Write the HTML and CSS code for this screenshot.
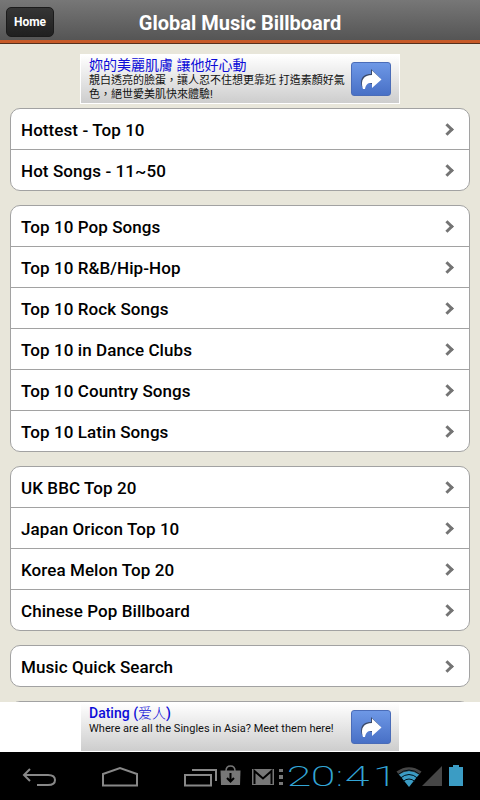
FILE: index.html
```
<!DOCTYPE html>
<html lang="en">

<head>
    <meta charset="UTF-8">
    <meta name="viewport" content="width=device-width, initial-scale=1.0">
    <title>Global Music Billboard</title>
    <link rel="stylesheet" href="styles.css">
</head>

<body>
    <header class="topbar">
        <a class="home" href="#">Home</a>
        <h1>Global Music Billboard</h1>
    </header>

    <main class="content">
        <div class="ad">
            <div class="ad-text">
                <a class="ad-title" href="#">妳的美麗肌膚 讓他好心動</a>
                <p>靚白透亮的臉蛋，讓人忍不住想更靠近 打造素顏好氣色，絕世愛美肌快來體驗!</p>
            </div>
            <div class="ad-button">
                <svg width="22" height="22" viewBox="0 0 22 22">
                    <path class="arrow-shadow" d="M2 18C-1 9 4 5 11 5V0l9 9-2 4-7 2C7 11 4 14 3 18z"/>
                    <path class="arrow" d="M3 20C0 11 4 6 12 6V1.500l9.500 9-9.500 8.500v-5C8 13.500 6 15 5 20z"/>
                </svg>
            </div>
        </div>

        <ul class="list">
            <li><a href="#">Hottest - Top 10</a></li>
            <li><a href="#">Hot Songs - 11~50</a></li>
        </ul>
        <ul class="list">
            <li><a href="#">Top 10 Pop Songs</a></li>
            <li><a href="#">Top 10 R&amp;B/Hip-Hop</a></li>
            <li><a href="#">Top 10 Rock Songs</a></li>
            <li><a href="#">Top 10 in Dance Clubs</a></li>
            <li><a href="#">Top 10 Country Songs</a></li>
            <li><a href="#">Top 10 Latin Songs</a></li>
        </ul>
        <ul class="list">
            <li><a href="#">UK BBC Top 20</a></li>
            <li><a href="#">Japan Oricon Top 10</a></li>
            <li><a href="#">Korea Melon Top 20</a></li>
            <li><a href="#">Chinese Pop Billboard</a></li>
        </ul>
        <ul class="list">
            <li><a href="#">Music Quick Search</a></li>
        </ul>
        <ul class="list">
            <li></li>
        </ul>
    </main>

    <div class="bottom-ad">
        <div class="ad ad-latin">
            <div class="ad-text">
                <a class="ad-title" href="#">Dating (<span class="cjk">爱人</span>)</a>
                <p>Where are all the Singles in Asia? Meet them here!</p>
            </div>
            <div class="ad-button">
                <svg width="22" height="22" viewBox="0 0 22 22">
                    <path class="arrow-shadow" d="M2 18C-1 9 4 5 11 5V0l9 9-2 4-7 2C7 11 4 14 3 18z"/>
                    <path class="arrow" d="M3 20C0 11 4 6 12 6V1.500l9.500 9-9.500 8.500v-5C8 13.500 6 15 5 20z"/>
                </svg>
            </div>
        </div>
    </div>

    <footer class="sysbar">
        <svg class="back" width="36" height="20" viewBox="0 0 36 20">
            <path d="M8 2L2 8l6 6M2 8h24q7 0 7 5t-7 5H15"/>
        </svg>
        <svg class="house" width="38" height="22" viewBox="0 0 38 22">
            <path d="M2 19.500V8l17-6 17 6v11.500z"/>
        </svg>
        <svg class="recent" width="36" height="20" viewBox="0 0 36 20">
            <path d="M2 7h26v10.500H2zM9 2h24v11"/>
        </svg>
        <svg class="market" width="21" height="22" viewBox="0 0 21 22">
            <path class="line" d="M6 6q0-5 4.500-5t4.500 5"/>
            <path class="fill" d="M.5 5.500h20L20 20H1z"/>
            <path class="cut" d="M10.500 8v8M7 13l3.500 3.500 3.500-3.500"/>
        </svg>
        <svg class="mail" width="22" height="16" viewBox="0 0 22 16">
            <path class="fill" d="M0 0h22v16H0z"/>
            <path class="cut" d="M2.500 15V2l8.500 7.500L19.500 2v13"/>
        </svg>
        <svg class="more" width="4" height="16" viewBox="0 0 4 16">
            <path class="fill" d="M0 0h4v3H0zM0 6h4v4H0zM0 13h4v3H0z"/>
        </svg>
        <div class="clock"><span class="digit">2</span><span class="digit">0</span><span class="colon">:</span><span class="digit four">4</span><span class="digit one">1</span></div>
        <svg class="wifi" width="28" height="22" viewBox="0 0 28 22">
            <path class="wifi-off" d="M1.500 5.500Q14-3 26.500 5.500l-3 4Q14 1 4.500 9.500z"/>
            <path class="wifi-on" d="M4 8.500Q14 1.500 24 8.500L14 21z"/>
            <path class="wifi-gap" d="M3 8.500Q14-.5 25 8.500M5.500 12Q14 5 22.500 12M8 15.500q6-5 12 0"/>
        </svg>
        <svg class="signal" width="20" height="20" viewBox="0 0 20 20">
            <path d="M20 0v20H0z"/>
        </svg>
        <svg class="battery" width="14" height="21" viewBox="0 0 14 21">
            <path d="M4 0h6v2h4v19H0V2h4z"/>
        </svg>
    </footer>
</body>

</html>
```
FILE: styles.css
```
* {
    box-sizing: border-box;
}

body {
    margin: 0;
    height: 800px;
    overflow: hidden;
    display: flex;
    flex-direction: column;
    font-family: Roboto, "Noto Sans CJK TC", sans-serif;
    background: #fff;
}

a {
    color: inherit;
    text-decoration: none;
}

/* title bar */
.topbar {
    flex: none;
    height: 44px;
    padding: 0 6px;
    display: grid;
    grid-template-columns: 48px 1fr 48px;
    align-items: center;
    background: linear-gradient(#777, #555 40px);
    border-bottom: 1px solid #55301d;
    box-shadow: inset 0 -3px #c75a28;
    color: #fff;
}

.home {
    height: 30px;
    border: 1px solid #1b1b1b;
    border-radius: 5px;
    background: linear-gradient(#353535, #202020);
    font-size: 12px;
    font-weight: bold;
    line-height: 28px;
    text-align: center;
}

h1 {
    margin: 2px 0 0;
    font-size: 20px;
    font-weight: bold;
    line-height: 30px;
    text-align: center;
}

.content {
    flex: none;
    height: 658px;
    padding: 10px 10px 0;
    overflow: hidden;
    background: #e8e6da;
}

/* ad banners */
.ad {
    width: 320px;
    height: 50px;
    margin: 0 auto 4px;
    padding: 0 8px;
    display: flex;
    justify-content: space-between;
    border: 1px solid #fff;
    background: linear-gradient(#fff, #cdcdcd);
}

.ad-text {
    width: 258px;
    white-space: nowrap;
}

.ad-title {
    display: block;
    margin-top: 1px;
    color: #0c0cd8;
    font-size: 14px;
    line-height: 19px;
}

.ad p {
    margin: -1px 0 0;
    color: #111;
    font-size: 11px;
    line-height: 14px;
    white-space: normal;
}

.ad-button {
    width: 40px;
    height: 34px;
    margin-top: 7px;
    padding: 6px 8px;
    border: 1px solid #4a6cb8;
    border-radius: 3px;
    background: linear-gradient(#6e98e6, #4870c6);
}

.ad-button svg {
    display: block;
}

.arrow {
    fill: #fff;
}

.arrow-shadow {
    fill: #3b4a68;
}

.bottom-ad {
    flex: none;
    height: 50px;
    background: #fff;
}

.ad-latin .ad-title {
    margin-top: 0;
    font-size: 14px;
    font-weight: 500;
}

.ad-latin p {
    letter-spacing: 0.030px;
}

.ad-latin .cjk {
    font-family: "Noto Sans CJK SC", sans-serif;
    font-weight: 300;
}

/* menu lists */
.list {
    margin: 0 0 14px;
    padding: 0;
    border: 1px solid #a2a2a2;
    border-radius: 10px;
    background: #fff;
    list-style: none;
}

.list li {
    height: 40px;
    padding: 2px 17px 0 10px;
    display: flex;
    align-items: center;
    justify-content: space-between;
    font-size: 17px;
    font-weight: 500;
    letter-spacing: 0.080px;
    color: #000;
}

.list li + li {
    height: 41px;
    border-top: 1px solid #a2a2a2;
}

.list li::after {
    content: "";
    box-sizing: border-box;
    width: 9px;
    height: 9px;
    margin-top: -1px;
    border: solid #747474;
    border-width: 3px 3px 0 0;
    transform: rotate(45deg);
}

/* system bar */
.sysbar {
    flex: none;
    height: 48px;
    padding-left: 22px;
    display: flex;
    align-items: flex-start;
    background: #000;
}

.sysbar svg {
    flex: none;
    display: block;
    margin-top: 14px;
}

.back path,
.house path,
.recent path {
    fill: none;
    stroke: #888;
    stroke-width: 2;
}

.sysbar .back {
    margin-top: 15px;
}

.sysbar .house {
    margin: 14px 0 0 43px;
}

.sysbar .recent {
    margin: 16px 0 0 44px;
}

.sysbar .market {
    margin: 13px 0 0 1px;
}

.sysbar .mail {
    margin: 17px 0 0 11px;
}

.sysbar .more {
    margin: 17px 0 0 5px;
}

.fill {
    fill: #777;
}

.line {
    fill: none;
    stroke: #777;
    stroke-width: 1.500;
}

.cut {
    fill: none;
    stroke: #000;
    stroke-width: 2;
}

.clock {
    width: 112px;
    height: 48px;
    margin-left: 4px;
    display: flex;
    color: #33a5d5;
    font-family: Roboto, sans-serif;
    font-size: 28px;
    font-weight: 200;
    line-height: 49px;
}

.clock span {
    flex: none;
    display: flex;
    justify-content: center;
}

.clock .digit {
    width: 24px;
    transform: scaleX(1.600);
}

.clock .colon {
    width: 9px;
}

.clock .four {
    width: 26px;
}

.clock .one {
    margin-left: 3px;
}

.sysbar .wifi {
    margin: 14px 0 0 -4px;
}

.wifi-off,
.signal path {
    fill: #464646;
}

.wifi-on,
.battery path {
    fill: #3b9cc4;
}

.wifi-gap {
    fill: none;
    stroke: #001018;
    stroke-width: 1;
}

.sysbar .signal {
    margin-left: -1px;
}

.sysbar .battery {
    margin: 13px 0 0 7px;
}
```
